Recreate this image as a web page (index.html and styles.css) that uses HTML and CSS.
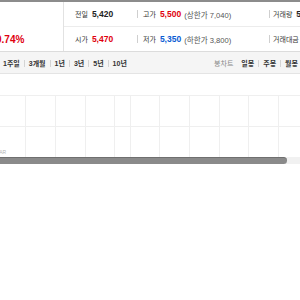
FILE: index.html
```html
<!DOCTYPE html>
<html lang="ko">
<head>
    <meta charset="UTF-8">
    <meta name="viewport" content="width=device-width, initial-scale=1.0">
    <title>시세</title>
    <link rel="stylesheet" href="styles.css">
</head>
<body>
    <div class="topbar"></div>

    <div class="quote">
        <div class="rate">0.74%</div>
        <div class="stats">
            <div class="row">
                <div class="cell first"><span class="lbl">전일</span> <b class="num">5,420</b></div>
                <div class="cell mid"><span class="lbl">고가</span> <b class="num up">5,500</b> <span class="sub">(상한가 7,040)</span></div>
                <div class="cell last"><span class="lbl">거래량</span> <b class="num">5</b></div>
            </div>
            <div class="row">
                <div class="cell first"><span class="lbl">시가</span> <b class="num up">5,470</b></div>
                <div class="cell mid"><span class="lbl">저가</span> <b class="num down">5,350</b> <span class="sub">(하한가 3,800)</span></div>
                <div class="cell last"><span class="lbl">거래대금</span></div>
            </div>
        </div>
    </div>

    <div class="tabs">
        <div class="periods">
            <a>1주일</a>
            <a>3개월</a>
            <a>1년</a>
            <a>3년</a>
            <a>5년</a>
            <a>10년</a>
        </div>
        <div class="candles">
            <span class="title">봉차트</span>
            <a>일봉</a>
            <a>주봉</a>
            <a>월봉</a>
        </div>
    </div>

    <div class="chart">
        <svg class="grid" width="300" height="62" viewBox="0 0 300 62">
            <g stroke="#efefef" stroke-width="1">
                <line x1="0" y1="0.5" x2="300" y2="0.5"/>
                <line x1="0" y1="31.5" x2="300" y2="31.5"/>
                <line x1="25.5" y1="0" x2="25.5" y2="62"/>
                <line x1="55.5" y1="0" x2="55.5" y2="62"/>
                <line x1="85.5" y1="0" x2="85.5" y2="62"/>
                <line x1="114.5" y1="0" x2="114.5" y2="62"/>
                <line x1="130.5" y1="0" x2="130.5" y2="62"/>
                <line x1="159.5" y1="0" x2="159.5" y2="62"/>
                <line x1="189.5" y1="0" x2="189.5" y2="62"/>
                <line x1="219.5" y1="0" x2="219.5" y2="62"/>
                <line x1="248.5" y1="0" x2="248.5" y2="62"/>
                <line x1="278.5" y1="0" x2="278.5" y2="62"/>
            </g>
        </svg>
        <span class="axis">MAR</span>
    </div>

    <div class="scroll">
        <div class="thumb"></div>
    </div>
</body>
</html>
```

FILE: styles.css
```css
body {
    margin: 0;
    padding: 0;
    width: 300px;
    overflow: hidden;
    background: #fff;
    font-family: "Liberation Sans", "Noto Sans CJK KR", sans-serif;
    color: #333;
}
.topbar {
    height: 2px;
    background-color: #8c8c8c;
}
.quote {
    display: flex;
    height: 49px;
    border-bottom: 1px solid #dcdcdc;
}
.rate {
    flex: none;
    width: 64px;
    border-right: 1px solid #e2e2e2;
    padding-top: 32px;
    box-sizing: border-box;
    text-indent: -4px;
    font-size: 10px;
    font-weight: bold;
    color: #e0000e;
    white-space: nowrap;
}
.stats {
    flex: 1;
    display: flex;
    flex-direction: column;
}
.row {
    display: flex;
    align-items: center;
    height: 24px;
    white-space: nowrap;
}
.row:first-child {
    height: 25px;
    border-bottom: 1px solid #ececec;
}
.cell {
    display: flex;
    align-items: center;
    gap: 4px;
}
.cell.first {
    width: 73px;
    padding-left: 11px;
    box-sizing: border-box;
}
.cell.mid {
    width: 132px;
}
.cell.mid::before,
.cell.last::before {
    content: "";
    display: inline-block;
    width: 1px;
    height: 8px;
    background-color: #cfcfcf;
    margin-right: 1px;
}
.cell.last::before {
    margin-right: -1px;
}
.lbl {
    font-size: 7px;
    color: #333;
}
.num {
    font-size: 8.5px;
    font-weight: bold;
    color: #222;
}
.num.up {
    color: #e0000e;
}
.num.down {
    color: #0a5bd3;
}
.sub {
    font-size: 7.6px;
    color: #555;
    margin-left: -1px;
}
.tabs {
    display: flex;
    justify-content: space-between;
    align-items: center;
    height: 21px;
    background-color: #f5f5f5;
    border-bottom: 1px solid #e4e4e4;
    font-size: 7px;
    white-space: nowrap;
}
.periods,
.candles {
    display: flex;
    align-items: center;
}
.periods {
    padding-left: 3px;
}
.periods a,
.candles a {
    color: #333;
    font-weight: bold;
}
.periods a + a::before,
.candles a + a::before {
    content: "";
    display: inline-block;
    width: 1px;
    height: 7px;
    background-color: #d4d4d4;
    margin: 0 4px;
    vertical-align: -1px;
}
.candles {
    margin-right: 2px;
}
.candles .title {
    color: #8a8a8a;
    margin-right: 8px;
}
.chart {
    position: relative;
    height: 83px;
    display: flex;
    align-items: flex-end;
}
.grid {
    display: block;
}
.axis {
    position: absolute;
    left: -5px;
    bottom: 2px;
    font-size: 5px;
    color: #b5b5b5;
}
.scroll {
    height: 7px;
    background-color: #f1f1f1;
}
.thumb {
    width: 287px;
    height: 7px;
    background-color: #8a8a8a;
    border-top: 1px solid #6f6f6f;
    box-sizing: border-box;
    border-radius: 0 4px 4px 0;
}
```
